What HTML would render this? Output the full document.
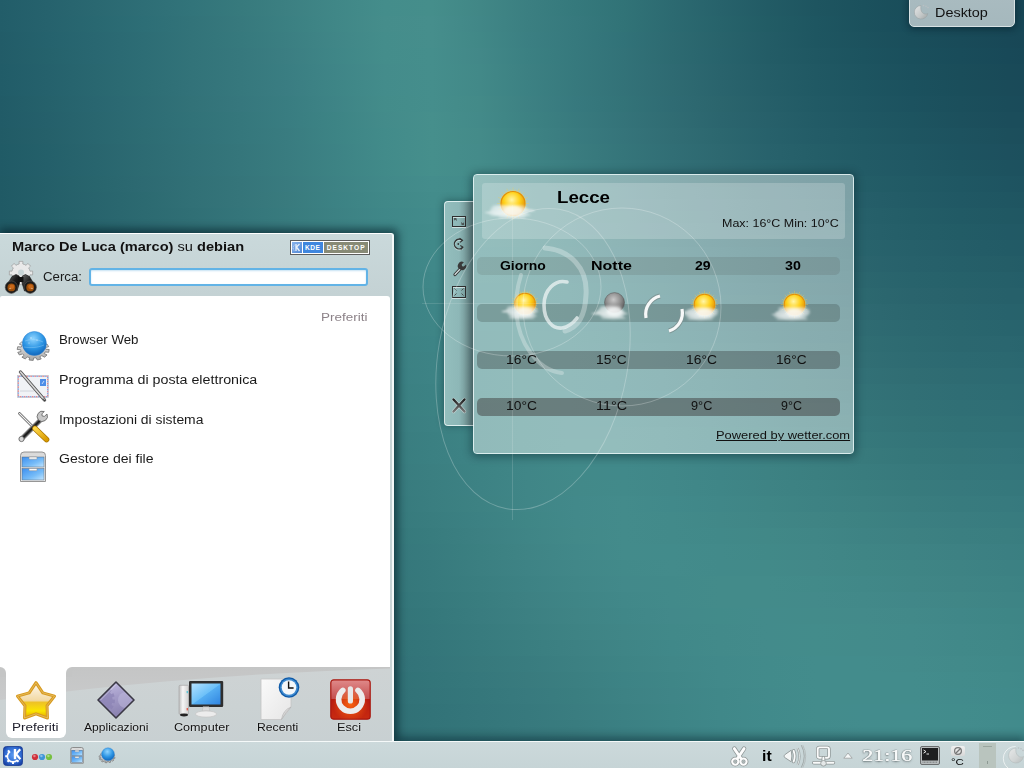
<!DOCTYPE html>
<html><head><meta charset="utf-8">
<style>
html,body{margin:0;padding:0;width:1024px;height:768px;overflow:hidden;font-family:"Liberation Sans",sans-serif;background:#2c6a72;}
#bg{position:absolute;left:0;top:0;width:1024px;height:768px;overflow:hidden}
#bg div{position:absolute;left:0;width:1024px;height:16px;}
.a{position:absolute}
.tx{position:absolute;white-space:nowrap;line-height:1;color:#141414;transform-origin:0 0}
svg{position:absolute;overflow:visible}
</style></head><body>
<div id="bg"><div style="top:0px;background:linear-gradient(90deg,#225d69 0px,#26626d 48px,#2a6871 96px,#2e6e76 144px,#32747a 192px,#377a7d 240px,#3c8082 288px,#408787 336px,#448d8b 384px,#458e8b 432px,#418786 480px,#3b7f81 528px,#35797c 576px,#317377 624px,#2c6a71 672px,#27626b 720px,#225b65 768px,#1e5560 816px,#1b515d 864px,#194d5a 912px,#184958 960px,#174756 1008px,#174655 1024px)"></div>
<div style="top:16px;background:linear-gradient(90deg,#225d69 0px,#26626d 48px,#296871 96px,#2d6e76 144px,#327379 192px,#37797d 240px,#3b8082 288px,#408787 336px,#458d8b 384px,#468e8c 432px,#418787 480px,#3b7f81 528px,#36797d 576px,#317377 624px,#2c6a71 672px,#27636b 720px,#225c65 768px,#1e5661 816px,#1b515d 864px,#194d5b 912px,#184a58 960px,#174756 1008px,#174756 1024px)"></div>
<div style="top:32px;background:linear-gradient(90deg,#225c68 0px,#25626d 48px,#296771 96px,#2d6d75 144px,#327379 192px,#36797d 240px,#3b7f82 288px,#408687 336px,#448d8b 384px,#468e8c 432px,#418887 480px,#3b7f82 528px,#36797d 576px,#317278 624px,#2d6a71 672px,#28636b 720px,#235c66 768px,#1e5661 816px,#1c525e 864px,#1a4e5b 912px,#194b59 960px,#184857 1008px,#184756 1024px)"></div>
<div style="top:48px;background:linear-gradient(90deg,#225c68 0px,#25626c 48px,#296771 96px,#2d6d75 144px,#327379 192px,#36787d 240px,#3b7e82 288px,#3f8687 336px,#448d8b 384px,#458e8c 432px,#428888 480px,#3b8082 528px,#36797d 576px,#327278 624px,#2d6a71 672px,#28636c 720px,#235c66 768px,#1f5762 816px,#1c535f 864px,#1a4f5c 912px,#194c5a 960px,#184958 1008px,#184857 1024px)"></div>
<div style="top:64px;background:linear-gradient(90deg,#215c68 0px,#25616c 48px,#296770 96px,#2d6d75 144px,#327379 192px,#36787d 240px,#3a7e82 288px,#3f8587 336px,#448c8b 384px,#458e8c 432px,#428988 480px,#3c8082 528px,#36797d 576px,#327278 624px,#2e6a72 672px,#29636c 720px,#245d67 768px,#205863 816px,#1d5460 864px,#1b505d 912px,#1a4d5a 960px,#194a58 1008px,#194958 1024px)"></div>
<div style="top:80px;background:linear-gradient(90deg,#215c68 0px,#25616c 48px,#296770 96px,#2d6d74 144px,#327279 192px,#36787d 240px,#3a7d82 288px,#3e8586 336px,#438c8b 384px,#458e8c 432px,#428988 480px,#3c8183 528px,#37797d 576px,#337278 624px,#2f6b72 672px,#2a646d 720px,#255e68 768px,#205964 816px,#1d5561 864px,#1b515e 912px,#1a4e5b 960px,#1a4b59 1008px,#1a4a59 1024px)"></div>
<div style="top:96px;background:linear-gradient(90deg,#215b67 0px,#25616b 48px,#296670 96px,#2d6c74 144px,#327278 192px,#36777d 240px,#397d81 288px,#3e8486 336px,#438c8a 384px,#458e8c 432px,#438a88 480px,#3d8183 528px,#37797e 576px,#337378 624px,#2f6b73 672px,#2b656d 720px,#265f69 768px,#215a65 816px,#1e5662 864px,#1c525f 912px,#1b4f5c 960px,#1a4c5a 1008px,#1a4b5a 1024px)"></div>
<div style="top:112px;background:linear-gradient(90deg,#215b67 0px,#25606b 48px,#29666f 96px,#2d6c74 144px,#317278 192px,#35777c 240px,#397d81 288px,#3d8485 336px,#438b8a 384px,#468f8c 432px,#438a89 480px,#3d8283 528px,#387a7e 576px,#347379 624px,#306c73 672px,#2b656e 720px,#27606a 768px,#225b66 816px,#1f5763 864px,#1d5460 912px,#1c505d 960px,#1b4d5b 1008px,#1b4d5b 1024px)"></div>
<div style="top:128px;background:linear-gradient(90deg,#215b66 0px,#25606a 48px,#29666f 96px,#2d6c73 144px,#317178 192px,#35777c 240px,#397c80 288px,#3d8485 336px,#428b8a 384px,#468f8c 432px,#448b89 480px,#3e8384 528px,#397b7f 576px,#35747a 624px,#316d74 672px,#2c676f 720px,#27616b 768px,#235c67 816px,#205964 864px,#1e5561 912px,#1d525f 960px,#1c4f5c 1008px,#1c4e5c 1024px)"></div>
<div style="top:144px;background:linear-gradient(90deg,#205b66 0px,#24606a 48px,#29656e 96px,#2d6b73 144px,#317177 192px,#35767b 240px,#397c80 288px,#3d8385 336px,#428b8a 384px,#468f8c 432px,#448b8a 480px,#3f8485 528px,#3a7c7f 576px,#35757a 624px,#316e75 672px,#2d6870 720px,#28626c 768px,#245e68 816px,#215a65 864px,#1f5763 912px,#1d5360 960px,#1d505e 1008px,#1c505d 1024px)"></div>
<div style="top:160px;background:linear-gradient(90deg,#205a66 0px,#245f6a 48px,#28656e 96px,#2d6b72 144px,#317077 192px,#35767b 240px,#397c7f 288px,#3d8384 336px,#418a89 384px,#458f8c 432px,#448c8a 480px,#3f8485 528px,#3a7d80 576px,#36767b 624px,#326f76 672px,#2e6971 720px,#29646d 768px,#255f69 816px,#225b66 864px,#205864 912px,#1e5561 960px,#1d525f 1008px,#1d515f 1024px)"></div>
<div style="top:176px;background:linear-gradient(90deg,#205a65 0px,#245f69 48px,#28656d 96px,#2d6a72 144px,#317076 192px,#35757a 240px,#397b7f 288px,#3d8284 336px,#418989 384px,#448d8c 432px,#438b8a 480px,#3f8586 528px,#3b7e81 576px,#37777c 624px,#337077 672px,#2f6a72 720px,#2a656e 768px,#27616a 816px,#235d67 864px,#215a65 912px,#1f5763 960px,#1e5461 1008px,#1e5360 1024px)"></div>
<div style="top:192px;background:linear-gradient(90deg,#205a65 0px,#245f69 48px,#28646d 96px,#2c6a71 144px,#317076 192px,#35757a 240px,#397b7e 288px,#3c8284 336px,#408888 384px,#438c8b 432px,#438b8a 480px,#408586 528px,#3c7f81 576px,#38787d 624px,#347278 672px,#306c73 720px,#2c676f 768px,#28626c 816px,#255e69 864px,#225b66 912px,#205864 960px,#1f5662 1008px,#1f5561 1024px)"></div>
<div style="top:208px;background:linear-gradient(90deg,#205a65 0px,#235f68 48px,#28646d 96px,#2c6a71 144px,#306f75 192px,#34757a 240px,#387b7e 288px,#3c8183 336px,#3f8788 384px,#428b8b 432px,#428a8a 480px,#408686 528px,#3c8082 576px,#38797e 624px,#347379 672px,#306d74 720px,#2d6870 768px,#29646d 816px,#26606a 864px,#235d67 912px,#215a65 960px,#205863 1008px,#205763 1024px)"></div>
<div style="top:224px;background:linear-gradient(90deg,#205964 0px,#235e68 48px,#27646c 96px,#2c6971 144px,#306f75 192px,#347479 240px,#387a7e 288px,#3c8083 336px,#3e8687 384px,#418a8a 432px,#428a89 480px,#408687 528px,#3c8083 576px,#397a7e 624px,#35747a 672px,#316f76 720px,#2e6a71 768px,#2a656e 816px,#27616b 864px,#245e68 912px,#225c66 960px,#215965 1008px,#215964 1024px)"></div>
<div style="top:240px;background:linear-gradient(90deg,#1f5964 0px,#235e68 48px,#27636c 96px,#2b6970 144px,#306e75 192px,#347479 240px,#387a7d 288px,#3b8082 336px,#3e8587 384px,#408989 432px,#418989 480px,#408687 528px,#3d8183 576px,#397b7f 624px,#36767b 672px,#327077 720px,#2f6b73 768px,#2b676f 816px,#28636c 864px,#26606a 912px,#245d68 960px,#225b66 1008px,#225a66 1024px)"></div>
<div style="top:256px;background:linear-gradient(90deg,#1f5964 0px,#235e68 48px,#27636c 96px,#2b6870 144px,#2f6e74 192px,#337479 240px,#37797d 288px,#3b7f82 336px,#3d8486 384px,#408889 432px,#418889 480px,#3f8687 528px,#3d8284 576px,#3a7c80 624px,#37777c 672px,#337278 720px,#306d74 768px,#2d6870 816px,#2a646d 864px,#27616b 912px,#255f69 960px,#245d67 1008px,#235c67 1024px)"></div>
<div style="top:272px;background:linear-gradient(90deg,#1f5964 0px,#235e67 48px,#27636b 96px,#2b6870 144px,#2f6e74 192px,#337378 240px,#37797d 288px,#3a7f81 336px,#3d8485 384px,#3f8788 432px,#408888 480px,#3f8687 528px,#3d8284 576px,#3b7d81 624px,#37787d 672px,#347379 720px,#316e75 768px,#2e6a71 816px,#2b666e 864px,#28636c 912px,#26616a 960px,#255f69 1008px,#245e69 1024px)"></div>
<div style="top:288px;background:linear-gradient(90deg,#1f5964 0px,#235e67 48px,#27636b 96px,#2b686f 144px,#2f6d73 192px,#337378 240px,#36787c 288px,#3a7e81 336px,#3c8385 384px,#3f8687 432px,#408788 480px,#3f8687 528px,#3e8385 576px,#3b7e82 624px,#387a7e 672px,#35757a 720px,#327076 768px,#2f6b73 816px,#2c686f 864px,#2a646d 912px,#28626b 960px,#26606a 1008px,#26606a 1024px)"></div>
<div style="top:304px;background:linear-gradient(90deg,#1f5963 0px,#235d67 48px,#26626b 96px,#2a686f 144px,#2e6d73 192px,#327278 240px,#36787c 288px,#397d80 336px,#3c8284 384px,#3e8587 432px,#3f8788 480px,#3f8687 528px,#3e8385 576px,#3c7f82 624px,#397b7f 672px,#36767b 720px,#337177 768px,#306d74 816px,#2e6971 864px,#2b666e 912px,#29646d 960px,#27626c 1008px,#27626b 1024px)"></div>
<div style="top:320px;background:linear-gradient(90deg,#1f5963 0px,#225d67 48px,#26626b 96px,#2a676f 144px,#2e6d73 192px,#327277 240px,#35777c 288px,#397d80 336px,#3c8184 384px,#3e8586 432px,#3f8687 480px,#3f8687 528px,#3e8486 576px,#3c8083 624px,#3a7c80 672px,#37787c 720px,#347378 768px,#316f75 816px,#2f6b72 864px,#2c6870 912px,#2a666e 960px,#28646d 1008px,#28636d 1024px)"></div>
<div style="top:336px;background:linear-gradient(90deg,#1f5863 0px,#225d67 48px,#26626a 96px,#2a676e 144px,#2e6c72 192px,#317277 240px,#35777b 288px,#387c7f 336px,#3b8183 384px,#3d8486 432px,#3f8687 480px,#3f8687 528px,#3f8486 576px,#3d8184 624px,#3a7e81 672px,#38797d 720px,#35757a 768px,#327076 816px,#306d73 864px,#2d6a71 912px,#2b676f 960px,#2a666f 1008px,#29656e 1024px)"></div>
<div style="top:352px;background:linear-gradient(90deg,#1f5863 0px,#225d66 48px,#26626a 96px,#2a676e 144px,#2d6c72 192px,#317176 240px,#35767b 288px,#387b7f 336px,#3b8082 384px,#3d8385 432px,#3f8687 480px,#3f8687 528px,#3f8586 576px,#3d8285 624px,#3b7f82 672px,#397b7e 720px,#36767b 768px,#337277 816px,#316e74 864px,#2e6b72 912px,#2c6971 960px,#2b6870 1008px,#2a6770 1024px)"></div>
<div style="top:368px;background:linear-gradient(90deg,#1f5863 0px,#225d66 48px,#26616a 96px,#29666e 144px,#2d6b72 192px,#317176 240px,#34767a 288px,#377b7e 336px,#3a7f82 384px,#3d8385 432px,#3f8586 480px,#3f8687 528px,#3f8687 576px,#3e8385 624px,#3c8083 672px,#397c7f 720px,#37787c 768px,#347479 816px,#327076 864px,#306d73 912px,#2e6b72 960px,#2c6a72 1008px,#2c6972 1024px)"></div>
<div style="top:384px;background:linear-gradient(90deg,#1e5863 0px,#225c66 48px,#25616a 96px,#29666d 144px,#2d6b71 192px,#307075 240px,#34757a 288px,#377a7d 336px,#3a7f81 384px,#3c8284 432px,#3e8586 480px,#408687 528px,#408687 576px,#3e8486 624px,#3c8184 672px,#3a7e81 720px,#387a7d 768px,#35767a 816px,#337277 864px,#316f75 912px,#2f6d74 960px,#2d6c73 1008px,#2d6b73 1024px)"></div>
<div style="top:400px;background:linear-gradient(90deg,#1e5863 0px,#225c66 48px,#256169 96px,#29666d 144px,#2c6b71 192px,#307075 240px,#337579 288px,#36797d 336px,#397e80 384px,#3c8283 432px,#3e8586 480px,#408687 528px,#408788 576px,#3f8587 624px,#3d8385 672px,#3b7f82 720px,#397b7e 768px,#36777b 816px,#347478 864px,#327176 912px,#306f75 960px,#2f6e75 1008px,#2e6d75 1024px)"></div>
<div style="top:416px;background:linear-gradient(90deg,#1e5862 0px,#215c66 48px,#256169 96px,#28656d 144px,#2c6a71 192px,#2f6f75 240px,#337478 288px,#36797c 336px,#397d80 384px,#3c8183 432px,#3e8485 480px,#408687 528px,#408788 576px,#408688 624px,#3e8485 672px,#3c8083 720px,#3a7d80 768px,#38797c 816px,#35767a 864px,#337377 912px,#317176 960px,#307076 1008px,#306f76 1024px)"></div>
<div style="top:432px;background:linear-gradient(90deg,#1e5862 0px,#215c65 48px,#256069 96px,#28656d 144px,#2b6a70 192px,#2f6f74 240px,#327378 288px,#35787c 336px,#397c7f 384px,#3b8082 432px,#3e8485 480px,#408687 528px,#418889 576px,#408788 624px,#3f8586 672px,#3c8284 720px,#3b7f81 768px,#397b7e 816px,#36787b 864px,#347579 912px,#327378 960px,#317278 1008px,#317178 1024px)"></div>
<div style="top:448px;background:linear-gradient(90deg,#1e5762 0px,#215c65 48px,#246069 96px,#28656c 144px,#2b6970 192px,#2e6e74 240px,#327377 288px,#35777b 336px,#387c7e 384px,#3b8082 432px,#3e8385 480px,#408687 528px,#418889 576px,#418889 624px,#3f8687 672px,#3d8385 720px,#3c8082 768px,#3a7d7f 816px,#387a7c 864px,#35777a 912px,#347579 960px,#33747a 1008px,#327379 1024px)"></div>
<div style="top:464px;background:linear-gradient(90deg,#1e5762 0px,#215b65 48px,#246068 96px,#27646c 144px,#2b6970 192px,#2e6d73 240px,#317277 288px,#34777a 336px,#387b7e 384px,#3b7f81 432px,#3d8384 480px,#408687 528px,#418989 576px,#41898a 624px,#408788 672px,#3e8486 720px,#3d8283 768px,#3b7f80 816px,#397c7e 864px,#37797c 912px,#35777b 960px,#34767b 1008px,#34757b 1024px)"></div>
<div style="top:480px;background:linear-gradient(90deg,#1e5762 0px,#215b65 48px,#245f68 96px,#27646c 144px,#2a686f 192px,#2e6d73 240px,#317176 288px,#34767a 336px,#377a7d 384px,#3a7e80 432px,#3d8284 480px,#408687 528px,#428989 576px,#428a8a 624px,#418889 672px,#3f8687 720px,#3e8384 768px,#3c8182 816px,#3a7e7f 864px,#387b7d 912px,#37797d 960px,#35787c 1008px,#35777c 1024px)"></div>
<div style="top:496px;background:linear-gradient(90deg,#1d5762 0px,#205b65 48px,#245f68 96px,#27636b 144px,#2a686f 192px,#2d6c72 240px,#307176 288px,#337579 336px,#36797c 384px,#3a7e80 432px,#3d8283 480px,#408687 528px,#42898a 576px,#438b8b 624px,#41898a 672px,#408788 720px,#3f8585 768px,#3d8283 816px,#3c8081 864px,#3a7d7f 912px,#387b7e 960px,#377a7e 1008px,#36797e 1024px)"></div>
<div style="top:512px;background:linear-gradient(90deg,#1d5762 0px,#205b65 48px,#235f68 96px,#26636b 144px,#2a676e 192px,#2d6c72 240px,#307075 288px,#337479 336px,#36797c 384px,#397d7f 432px,#3c8183 480px,#3f8686 528px,#42898a 576px,#438b8b 624px,#428a8a 672px,#418888 720px,#408686 768px,#3f8484 816px,#3d8282 864px,#3b7f81 912px,#3a7d80 960px,#387c7f 1008px,#387b7f 1024px)"></div>
<div style="top:528px;background:linear-gradient(90deg,#1d5761 0px,#205b64 48px,#235f68 96px,#26636b 144px,#29676e 192px,#2c6b71 240px,#2f7075 288px,#327478 336px,#35787b 384px,#387c7e 432px,#3c8082 480px,#3f8586 528px,#428989 576px,#438b8b 624px,#428a8a 672px,#418989 720px,#418887 768px,#408686 816px,#3e8384 864px,#3d8182 912px,#3b7f81 960px,#3a7e80 1008px,#397d80 1024px)"></div>
<div style="top:544px;background:linear-gradient(90deg,#1d5661 0px,#205a64 48px,#235e67 96px,#26626a 144px,#29676e 192px,#2c6b71 240px,#2f6f74 288px,#327377 336px,#35777b 384px,#387b7e 432px,#3b8081 480px,#3f8485 528px,#418889 576px,#438b8b 624px,#428b8b 672px,#428a8a 720px,#418988 768px,#418787 816px,#3f8585 864px,#3e8384 912px,#3d8183 960px,#3b7f82 1008px,#3a7f81 1024px)"></div>
<div style="top:560px;background:linear-gradient(90deg,#1d5661 0px,#205a64 48px,#235e67 96px,#25626a 144px,#28666d 192px,#2b6a71 240px,#2e6e74 288px,#317277 336px,#34767a 384px,#377a7d 432px,#3b7f81 480px,#3e8385 528px,#418788 576px,#428a8a 624px,#438b8b 672px,#428a8a 720px,#428a89 768px,#428888 816px,#408786 864px,#3f8585 912px,#3e8384 960px,#3c8183 1008px,#3b8183 1024px)"></div>
<div style="top:576px;background:linear-gradient(90deg,#1d5661 0px,#1f5a64 48px,#225e67 96px,#25626a 144px,#28666d 192px,#2b6a70 240px,#2e6e73 288px,#317276 336px,#347679 384px,#377a7d 432px,#3a7e80 480px,#3d8284 528px,#408687 576px,#42898a 624px,#428a8a 672px,#438b8a 720px,#438b8a 768px,#428a89 816px,#418888 864px,#408686 912px,#3f8485 960px,#3d8384 1008px,#3c8284 1024px)"></div>
<div style="top:592px;background:linear-gradient(90deg,#1c5661 0px,#1f5a64 48px,#225d67 96px,#25616a 144px,#28656d 192px,#2b6970 240px,#2d6d73 288px,#307176 336px,#337579 384px,#36797c 432px,#397d7f 480px,#3d8183 528px,#3f8586 576px,#418889 624px,#428a8a 672px,#438b8a 720px,#438b8a 768px,#438a8a 816px,#428989 864px,#418788 912px,#408686 960px,#3e8485 1008px,#3d8485 1024px)"></div>
<div style="top:608px;background:linear-gradient(90deg,#1c5661 0px,#1f5964 48px,#225d66 96px,#256169 144px,#27656c 192px,#2a696f 240px,#2d6c72 288px,#307075 336px,#337478 384px,#35787b 432px,#397c7f 480px,#3c8082 528px,#3f8485 576px,#408788 624px,#42898a 672px,#428b8a 720px,#438b8b 768px,#438b8a 816px,#438a8a 864px,#428989 912px,#408788 960px,#3e8686 1008px,#3e8586 1024px)"></div>
<div style="top:624px;background:linear-gradient(90deg,#1c5661 0px,#1f5963 48px,#225d66 96px,#246169 144px,#27646c 192px,#2a686f 240px,#2d6c72 288px,#2f7075 336px,#327378 384px,#35777b 432px,#387b7e 480px,#3b7f81 528px,#3e8384 576px,#408687 624px,#418989 672px,#428a8a 720px,#438b8b 768px,#438c8b 816px,#438b8a 864px,#428a8a 912px,#418889 960px,#3f8787 1008px,#3e8687 1024px)"></div>
<div style="top:640px;background:linear-gradient(90deg,#1c5661 0px,#1f5963 48px,#215d66 96px,#246069 144px,#27646c 192px,#29686f 240px,#2c6b72 288px,#2f6f74 336px,#317377 384px,#34767a 432px,#377a7d 480px,#3a7e80 528px,#3d8183 576px,#3f8586 624px,#408889 672px,#428a8a 720px,#438b8b 768px,#438c8b 816px,#438b8b 864px,#438a8b 912px,#418989 960px,#408888 1008px,#3f8788 1024px)"></div>
<div style="top:656px;background:linear-gradient(90deg,#1c5561 0px,#1e5963 48px,#215c66 96px,#246069 144px,#26646b 192px,#29676e 240px,#2c6b71 288px,#2e6e74 336px,#317277 384px,#34757a 432px,#37797c 480px,#397c7f 528px,#3c8082 576px,#3e8485 624px,#408788 672px,#41898a 720px,#428b8b 768px,#438c8c 816px,#438c8c 864px,#438b8b 912px,#428a8a 960px,#408989 1008px,#408889 1024px)"></div>
<div style="top:672px;background:linear-gradient(90deg,#1c5560 0px,#1e5963 48px,#215c66 96px,#236068 144px,#26636b 192px,#29676e 240px,#2b6a71 288px,#2e6e74 336px,#307176 384px,#337579 432px,#36787c 480px,#397b7e 528px,#3b7f81 576px,#3d8385 624px,#3f8687 672px,#41898a 720px,#428b8b 768px,#438c8c 816px,#438c8c 864px,#438c8c 912px,#428b8b 960px,#418a8a 1008px,#40898a 1024px)"></div>
<div style="top:688px;background:linear-gradient(90deg,#1c5560 0px,#1e5963 48px,#215c66 96px,#235f68 144px,#26636b 192px,#28666e 240px,#2b6a70 288px,#2d6d73 336px,#307176 384px,#337479 432px,#35777b 480px,#387a7e 528px,#3a7e80 576px,#3d8284 624px,#3f8587 672px,#408889 720px,#428a8b 768px,#438c8c 816px,#438c8c 864px,#438c8c 912px,#428b8c 960px,#418a8b 1008px,#408a8a 1024px)"></div>
<div style="top:704px;background:linear-gradient(90deg,#1b5560 0px,#1e5863 48px,#205c65 96px,#235f68 144px,#26636b 192px,#28666d 240px,#2b6970 288px,#2d6d73 336px,#307075 384px,#327378 432px,#35767b 480px,#37797d 528px,#3a7d80 576px,#3c8183 624px,#3e8586 672px,#408889 720px,#418a8b 768px,#438c8c 816px,#438c8d 864px,#438c8d 912px,#428c8c 960px,#418b8b 1008px,#418a8b 1024px)"></div>
<div style="top:720px;background:linear-gradient(90deg,#1b5560 0px,#1e5863 48px,#205c65 96px,#235f68 144px,#25626b 192px,#28666d 240px,#2a6970 288px,#2d6c72 336px,#2f6f75 384px,#327378 432px,#34767a 480px,#37797d 528px,#397c7f 576px,#3b8083 624px,#3d8486 672px,#3f8789 720px,#418a8b 768px,#428b8c 816px,#438c8d 864px,#438d8d 912px,#438c8d 960px,#428b8c 1008px,#418b8c 1024px)"></div>
<div style="top:736px;background:linear-gradient(90deg,#1b5560 0px,#1e5863 48px,#205b65 96px,#235f68 144px,#25626a 192px,#27656d 240px,#2a6970 288px,#2c6c72 336px,#2f6f75 384px,#317277 432px,#34757a 480px,#36787c 528px,#397b7f 576px,#3b7f82 624px,#3d8385 672px,#3f8788 720px,#41898a 768px,#428b8c 816px,#438c8d 864px,#438d8d 912px,#438d8d 960px,#428c8c 1008px,#418b8c 1024px)"></div>
<div style="top:752px;background:linear-gradient(90deg,#1b5560 0px,#1e5863 48px,#205b65 96px,#225e68 144px,#25626a 192px,#27656d 240px,#2a686f 288px,#2c6b72 336px,#2e6e74 384px,#317177 432px,#337479 480px,#36787c 528px,#387b7f 576px,#3a7f82 624px,#3d8385 672px,#3f8688 720px,#40898a 768px,#428b8c 816px,#438c8d 864px,#438d8d 912px,#438d8d 960px,#428c8d 1008px,#428c8d 1024px)"></div></div>
<!-- DESKTOP TOOLBOX -->
<div class="a" style="left:909px;top:-5px;width:106px;height:32px;border-radius:5px;box-shadow:0 1px 7px 1px rgba(0,20,30,.45)"></div>
<div class="a" style="left:909px;top:-5px;width:104px;height:30px;background:linear-gradient(#a9bbc0,#a5b8bd);border:1px solid #d8e2e4;border-radius:5px"></div>
<svg style="left:913px;top:3px" width="17" height="17" viewBox="0 0 17 17">
 <defs><linearGradient id="csh" x1="0" y1="0" x2="1" y2="1"><stop offset="0" stop-color="#e4e6e6"/><stop offset=".6" stop-color="#c4c8c8"/><stop offset="1" stop-color="#9ea4a4"/></linearGradient></defs>
 <path d="M8 2.5A6.8 6.8 0 1 0 14.8 10.5C13.5 11.5 11 11.2 9.5 9.8 7.8 8.2 7.5 5 8 2.5z" fill="url(#csh)" stroke="#9aa2a4" stroke-width=".6"/>
 <circle cx="10.5" cy="2.6" r=".8" fill="#b9c0c2"/><circle cx="13" cy="3.2" r=".8" fill="#b9c0c2"/><circle cx="15" cy="4.6" r=".8" fill="#b9c0c2"/>
</svg>

<!-- WIDGET HANDLE -->
<div class="a" style="left:444px;top:201px;width:40px;height:224px;border-radius:4px;box-shadow:0 0 7px 1px rgba(0,25,35,.35)"></div>
<div class="a" style="left:444px;top:201px;width:38px;height:223px;background:linear-gradient(90deg,#93bebd,#8db7b7 14px,#7fa5a5 19px,#6f9090 24px,#5e7c7c 29px);border:1px solid rgba(235,248,248,.85);border-radius:4px"></div>
<svg style="left:452px;top:216px" width="14" height="12" viewBox="0 0 14 12"><g fill="none" stroke-width="1"><g stroke="#e6f2f2" transform="translate(0 1)" opacity=".7"><rect x=".5" y=".5" width="13" height="10"/></g><rect x=".5" y=".5" width="13" height="10" stroke="#2e2e2e"/><path d="M2.5 2.5l2.5 1.8M11.5 8.5L9 6.7" stroke="#444"/><path d="M2.5 2.5h2M2.5 2.5v1.8M11.5 8.5h-2M11.5 8.5v-1.8" stroke="#444" stroke-width=".8"/></g></svg>
<svg style="left:452px;top:237px" width="14" height="14" viewBox="0 0 14 14"><g fill="none"><path d="M10.2 3.3A4.8 4.8 0 1 0 10.8 10.2" stroke="#e6f2f2" stroke-width="1.4" transform="translate(0 1)" opacity=".6"/><path d="M10.2 3.3A4.8 4.8 0 1 0 10.8 10.2" stroke="#333" stroke-width="1.3"/><path d="M7.5 1.2l3 2.2-2.6 2M8.3 8.6l2.6 1.5-2.2 2.6" stroke="#333" stroke-width="1.1"/></g><circle cx="6.3" cy="7" r=".9" fill="#333"/></svg>
<svg style="left:453px;top:261px" width="14" height="15" viewBox="0 0 14 15"><path d="M2 13.5L7.6 7.5" stroke="#333" stroke-width="3.2" stroke-linecap="round"/><path d="M2 13.5L7.6 7.5" stroke="#d6e2e2" stroke-width="1.2" stroke-linecap="round"/><path d="M6.8 8.2a4 4 0 0 0 6.2-4.6l-2.2 2-1.7-.4-.4-1.7L10.9 1.3A4 4 0 0 0 6.8 8.2z" fill="#3a3a3a"/></svg>
<svg style="left:452px;top:286px" width="14" height="13" viewBox="0 0 14 13"><g fill="none" stroke-width="1"><rect x=".5" y="1.5" width="13" height="11" stroke="#e6f2f2" opacity=".7"/><rect x=".5" y=".5" width="13" height="11" stroke="#2e2e2e"/><path d="M2.5 2.5l2 2M11.5 2.5l-2 2M2.5 9.5l2-2M11.5 9.5l-2-2" stroke="#444" stroke-width=".9"/></g></svg>
<svg style="left:452px;top:398px" width="14" height="15" viewBox="0 0 14 15"><defs><linearGradient id="xg" x1="0" y1="0" x2="0" y2="1"><stop offset="0" stop-color="#222"/><stop offset="1" stop-color="#777"/></linearGradient></defs><path d="M1.5 1.5l11 12M12.5 1.5l-11 12" stroke="#e8f0f0" stroke-width="3.4" stroke-linecap="round" opacity=".6"/><path d="M1.5 1.5l11 12M12.5 1.5l-11 12" stroke="url(#xg)" stroke-width="2.4" stroke-linecap="round"/></svg>

<!-- WIDGET -->
<div class="a" style="left:473px;top:174px;width:381px;height:280px;border-radius:4px;box-shadow:0 1px 9px 2px rgba(0,25,35,.4)"></div>
<div class="a" style="left:474px;top:175px;width:379px;height:278px;overflow:hidden;border-radius:3px"><div style="position:absolute;left:0;top:0px;width:379px;height:12px;background:linear-gradient(90deg,#96c0be 0px,#93bbbb 47px,#8fb7b7 94px,#8cb2b4 141px,#89aeb1 188px,#86aaad 235px,#83a6aa 282px,#80a3a8 329px,#7da1a6 376px,#7da1a6 379px)"></div>
<div style="position:absolute;left:0;top:12px;width:379px;height:12px;background:linear-gradient(90deg,#95bfbe 0px,#93bcbb 47px,#90b7b8 94px,#8cb3b5 141px,#89aeb1 188px,#86abae 235px,#83a7ab 282px,#80a4a9 329px,#7ea1a6 376px,#7da1a6 379px)"></div>
<div style="position:absolute;left:0;top:24px;width:379px;height:12px;background:linear-gradient(90deg,#95bfbd 0px,#93bcbb 47px,#90b8b8 94px,#8db3b5 141px,#8aafb2 188px,#87abaf 235px,#84a8ac 282px,#81a5a9 329px,#7ea2a7 376px,#7ea2a7 379px)"></div>
<div style="position:absolute;left:0;top:36px;width:379px;height:12px;background:linear-gradient(90deg,#94bfbd 0px,#93bcbb 47px,#90b8b8 94px,#8db4b5 141px,#8ab0b2 188px,#87acaf 235px,#84a8ac 282px,#82a5aa 329px,#7fa3a8 376px,#7fa3a7 379px)"></div>
<div style="position:absolute;left:0;top:48px;width:379px;height:12px;background:linear-gradient(90deg,#94bebd 0px,#93bcbb 47px,#90b8b9 94px,#8eb4b6 141px,#8bb0b3 188px,#88adb0 235px,#85a9ad 282px,#82a6aa 329px,#80a4a8 376px,#80a4a8 379px)"></div>
<div style="position:absolute;left:0;top:60px;width:379px;height:12px;background:linear-gradient(90deg,#94bebd 0px,#93bcbb 47px,#90b9b9 94px,#8eb5b6 141px,#8bb1b3 188px,#88adb0 235px,#86aaad 282px,#83a7ab 329px,#81a4a9 376px,#80a4a9 379px)"></div>
<div style="position:absolute;left:0;top:72px;width:379px;height:12px;background:linear-gradient(90deg,#93bdbd 0px,#92bcbb 47px,#91b9b9 94px,#8eb5b7 141px,#8cb2b4 188px,#89aeb1 235px,#86abae 282px,#84a8ac 329px,#81a5a9 376px,#81a5a9 379px)"></div>
<div style="position:absolute;left:0;top:84px;width:379px;height:12px;background:linear-gradient(90deg,#93bdbd 0px,#92bcbb 47px,#91b9b9 94px,#8fb6b7 141px,#8cb2b4 188px,#89afb1 235px,#87acaf 282px,#84a9ac 329px,#82a6aa 376px,#82a6aa 379px)"></div>
<div style="position:absolute;left:0;top:96px;width:379px;height:12px;background:linear-gradient(90deg,#93bdbc 0px,#92bcbb 47px,#91b9ba 94px,#8fb6b7 141px,#8cb3b5 188px,#8ab0b2 235px,#87acaf 282px,#85a9ad 329px,#83a7ab 376px,#83a7aa 379px)"></div>
<div style="position:absolute;left:0;top:108px;width:379px;height:12px;background:linear-gradient(90deg,#92bcbc 0px,#92bcbb 47px,#91baba 94px,#8fb7b8 141px,#8db4b5 188px,#8ab0b3 235px,#88adb0 282px,#86aaad 329px,#84a7ab 376px,#83a7ab 379px)"></div>
<div style="position:absolute;left:0;top:120px;width:379px;height:12px;background:linear-gradient(90deg,#92bcbc 0px,#92bcbb 47px,#91baba 94px,#8fb7b8 141px,#8db4b6 188px,#8bb1b3 235px,#89aeb0 282px,#86abae 329px,#84a8ac 376px,#84a8ac 379px)"></div>
<div style="position:absolute;left:0;top:132px;width:379px;height:12px;background:linear-gradient(90deg,#92bcbc 0px,#92bcbb 47px,#91baba 94px,#90b8b8 141px,#8eb5b6 188px,#8bb2b4 235px,#89afb1 282px,#87acaf 329px,#85a9ac 376px,#85a9ac 379px)"></div>
<div style="position:absolute;left:0;top:144px;width:379px;height:12px;background:linear-gradient(90deg,#92bcbc 0px,#92bcbb 47px,#91babb 94px,#90b8b9 141px,#8eb5b7 188px,#8cb2b4 235px,#8aafb2 282px,#88adaf 329px,#86aaad 376px,#85aaad 379px)"></div>
<div style="position:absolute;left:0;top:156px;width:379px;height:12px;background:linear-gradient(90deg,#92bbbb 0px,#92bcbb 47px,#92bbbb 94px,#90b9b9 141px,#8eb6b7 188px,#8cb3b5 235px,#8ab0b2 282px,#88adb0 329px,#86abae 376px,#86abae 379px)"></div>
<div style="position:absolute;left:0;top:168px;width:379px;height:12px;background:linear-gradient(90deg,#92bbbb 0px,#92bcbb 47px,#92bbbb 94px,#91b9ba 141px,#8fb7b8 188px,#8db4b5 235px,#8bb1b3 282px,#89aeb0 329px,#87acae 376px,#87acae 379px)"></div>
<div style="position:absolute;left:0;top:180px;width:379px;height:12px;background:linear-gradient(90deg,#91bbbb 0px,#92bcbb 47px,#92bbbb 94px,#91baba 141px,#8fb7b8 188px,#8db5b6 235px,#8bb2b4 282px,#89afb1 329px,#87adaf 376px,#87acaf 379px)"></div>
<div style="position:absolute;left:0;top:192px;width:379px;height:12px;background:linear-gradient(90deg,#91bbbb 0px,#92bcbb 47px,#92bbbb 94px,#91baba 141px,#90b8b9 188px,#8eb5b6 235px,#8cb3b4 282px,#8ab0b2 329px,#88adb0 376px,#88adb0 379px)"></div>
<div style="position:absolute;left:0;top:204px;width:379px;height:12px;background:linear-gradient(90deg,#91bbbb 0px,#92bcbb 47px,#92bbbb 94px,#91babb 141px,#90b8b9 188px,#8eb6b7 235px,#8cb3b5 282px,#8bb1b2 329px,#89aeb0 376px,#89aeb0 379px)"></div>
<div style="position:absolute;left:0;top:216px;width:379px;height:12px;background:linear-gradient(90deg,#91bbba 0px,#92bcbb 47px,#92bcbc 94px,#92bbbb 141px,#90b9ba 188px,#8fb7b8 235px,#8db4b5 282px,#8bb2b3 329px,#89afb1 376px,#89afb1 379px)"></div>
<div style="position:absolute;left:0;top:228px;width:379px;height:12px;background:linear-gradient(90deg,#91baba 0px,#92bcbb 47px,#93bcbc 94px,#92bbbb 141px,#91baba 188px,#8fb7b8 235px,#8db5b6 282px,#8cb3b4 329px,#8ab0b2 376px,#8ab0b2 379px)"></div>
<div style="position:absolute;left:0;top:240px;width:379px;height:12px;background:linear-gradient(90deg,#91baba 0px,#92bcbb 47px,#93bcbc 94px,#92bcbc 141px,#91baba 188px,#90b8b9 235px,#8eb6b7 282px,#8cb3b4 329px,#8bb1b2 376px,#8bb1b2 379px)"></div>
<div style="position:absolute;left:0;top:252px;width:379px;height:12px;background:linear-gradient(90deg,#91baba 0px,#92bcbb 47px,#93bcbc 94px,#93bcbc 141px,#92bbbb 188px,#90b9b9 235px,#8eb7b7 282px,#8db4b5 329px,#8bb2b3 376px,#8bb2b3 379px)"></div>
<div style="position:absolute;left:0;top:264px;width:379px;height:12px;background:linear-gradient(90deg,#91baba 0px,#92bcbb 47px,#93bdbc 94px,#93bdbc 141px,#92bbbb 188px,#90b9ba 235px,#8fb7b8 282px,#8eb5b6 329px,#8cb3b4 376px,#8cb3b4 379px)"></div>
<div style="position:absolute;left:0;top:276px;width:379px;height:12px;background:linear-gradient(90deg,#90b9b9 0px,#92bcbb 47px,#93bdbd 94px,#93bdbd 141px,#92bcbc 188px,#91baba 235px,#90b8b8 282px,#8eb6b6 329px,#8db4b5 376px,#8db4b4 379px)"></div></div>
<div class="a" style="left:473px;top:174px;width:379px;height:278px;border:1px solid rgba(235,248,248,.9);border-radius:4px"></div>
<div class="a" style="left:482px;top:183px;width:363px;height:56px;background:rgba(255,255,255,.2);border-radius:3px"></div>

<div class="a" style="left:477px;top:257px;width:363px;height:18px;background:rgba(34,10,0,.09);border-radius:5px"></div>
<div class="a" style="left:477px;top:304px;width:363px;height:18px;background:rgba(8,4,0,.17);border-radius:5px"></div>
<div class="a" style="left:477px;top:351px;width:363px;height:18px;background:rgba(13,0,0,.25);border-radius:5px"></div>
<div class="a" style="left:477px;top:398px;width:363px;height:18px;background:rgba(21,0,0,.33);border-radius:5px"></div>


<!-- weather icons -->
<svg width="0" height="0" style="left:0;top:0">
 <defs>
  <radialGradient id="sun" cx=".45" cy=".35" r=".65"><stop offset="0" stop-color="#fff6a8"/><stop offset=".5" stop-color="#ffd21c"/><stop offset="1" stop-color="#e08a00"/></radialGradient>
  <radialGradient id="glow" cx=".5" cy=".5" r=".5"><stop offset=".6" stop-color="#ffe04a" stop-opacity=".7"/><stop offset="1" stop-color="#ffe04a" stop-opacity="0"/></radialGradient>
  <radialGradient id="moon" cx=".45" cy=".35" r=".65"><stop offset="0" stop-color="#c8c8c8"/><stop offset=".6" stop-color="#8a8a8a"/><stop offset="1" stop-color="#555"/></radialGradient>
  <filter id="cb" x="-20%" y="-80%" width="140%" height="260%"><feGaussianBlur stdDeviation="0.8"/></filter>
 </defs>
</svg>
<svg style="left:481px;top:183px" width="60" height="42" viewBox="0 0 60 42">
 <path d="M42.8 20.5L48.0 20.5M42.6 22.6L46.2 23.3M42.0 24.6L46.8 26.6M41.0 26.5L44.1 28.6M39.6 28.1L43.3 31.8M38.0 29.5L40.1 32.6M36.1 30.5L38.1 35.3M34.1 31.1L34.8 34.7M32.0 31.3L32.0 36.5M29.9 31.1L29.2 34.7M27.9 30.5L25.9 35.3M26.0 29.5L23.9 32.6M24.4 28.1L20.7 31.8M23.0 26.5L19.9 28.6M22.0 24.6L17.2 26.6M21.4 22.6L17.8 23.3M21.2 20.5L16.0 20.5M21.4 18.4L17.8 17.7M22.0 16.4L17.2 14.4M23.0 14.5L19.9 12.4M24.4 12.9L20.7 9.2M26.0 11.5L23.9 8.4M27.9 10.5L25.9 5.7M29.9 9.9L29.2 6.3M32.0 9.7L32.0 4.5M34.1 9.9L34.8 6.3M36.1 10.5L38.1 5.7M38.0 11.5L40.1 8.4M39.6 12.9L43.3 9.2M41.0 14.5L44.1 12.4M42.0 16.4L46.8 14.4M42.6 18.4L46.2 17.7" stroke="#ffd040" stroke-width=".7" opacity=".45"/>
 <circle cx="32" cy="20.5" r="13.2" fill="#ffdf50" opacity=".35"/>
 <circle cx="32" cy="20.5" r="12" fill="url(#sun)" stroke="#e3900a" stroke-width="1.20"/>
 <g filter="url(#cb)" fill="#fbfdfd">
  <ellipse cx="27.8" cy="23.0" rx="17.1" ry="1.2" opacity="0.60"/>
  <ellipse cx="28.1" cy="25.2" rx="19.0" ry="1.2" opacity="0.74"/>
  <ellipse cx="31.3" cy="27.4" rx="22.9" ry="1.2" opacity="0.88"/>
  <ellipse cx="25.7" cy="29.6" rx="22.2" ry="1.2" opacity="0.88"/>
  <ellipse cx="29.1" cy="31.8" rx="21.0" ry="1.2" opacity="0.74"/>
  <ellipse cx="31.1" cy="34.0" rx="14.3" ry="1.2" opacity="0.60"/>
  <ellipse cx="32" cy="28.0" rx="9.6" ry="5.4" opacity=".55"/>
 </g>
</svg>
<svg style="left:496px;top:289px" width="50" height="36" viewBox="0 0 50 36">
 <path d="M38.3 14.5L42.7 14.5M38.1 16.3L41.2 16.9M37.6 18.0L41.7 19.8M36.7 19.7L39.3 21.4M35.6 21.1L38.7 24.2M34.2 22.2L35.9 24.8M32.5 23.1L34.3 27.2M30.8 23.6L31.4 26.7M29.0 23.8L29.0 28.2M27.2 23.6L26.6 26.7M25.5 23.1L23.7 27.2M23.8 22.2L22.1 24.8M22.4 21.1L19.3 24.2M21.3 19.7L18.7 21.4M20.4 18.0L16.3 19.8M19.9 16.3L16.8 16.9M19.7 14.5L15.3 14.5M19.9 12.7L16.8 12.1M20.4 11.0L16.3 9.2M21.3 9.3L18.7 7.6M22.4 7.9L19.3 4.8M23.8 6.8L22.1 4.2M25.5 5.9L23.7 1.8M27.2 5.4L26.6 2.3M29.0 5.2L29.0 0.8M30.8 5.4L31.4 2.3M32.5 5.9L34.3 1.8M34.2 6.8L35.9 4.2M35.6 7.9L38.7 4.8M36.7 9.3L39.3 7.6M37.6 11.0L41.7 9.2M38.1 12.7L41.2 12.1" stroke="#ffd040" stroke-width=".7" opacity=".45"/>
 <circle cx="29" cy="14.5" r="11.5" fill="#ffdf50" opacity=".35"/>
 <circle cx="29" cy="14.5" r="10.3" fill="url(#sun)" stroke="#e3900a" stroke-width="1.03"/>
 <g filter="url(#cb)" fill="#fbfdfd">
  <ellipse cx="25.4" cy="18.0" rx="14.7" ry="1.2" opacity="0.60"/>
  <ellipse cx="25.8" cy="20.2" rx="16.1" ry="1.2" opacity="0.74"/>
  <ellipse cx="23.9" cy="22.4" rx="18.5" ry="1.2" opacity="0.88"/>
  <ellipse cx="25.4" cy="24.6" rx="14.5" ry="1.2" opacity="0.88"/>
  <ellipse cx="26.7" cy="26.8" rx="14.7" ry="1.2" opacity="0.74"/>
  <ellipse cx="25.8" cy="29.0" rx="13.2" ry="1.2" opacity="0.60"/>
  <ellipse cx="29" cy="23.0" rx="8.2" ry="4.6" opacity=".55"/>
 </g>
</svg>
<svg style="left:586px;top:289px" width="50" height="36" viewBox="0 0 50 36">
 <circle cx="28.5" cy="13.6" r="10" fill="url(#moon)" stroke="#555" stroke-width=".5"/>
 <g filter="url(#cb)" fill="#fbfdfd">
  <ellipse cx="24.6" cy="18.0" rx="11.5" ry="1.2" opacity="0.60"/>
  <ellipse cx="24.5" cy="20.2" rx="12.4" ry="1.2" opacity="0.74"/>
  <ellipse cx="24.4" cy="22.4" rx="14.7" ry="1.2" opacity="0.88"/>
  <ellipse cx="23.6" cy="24.6" rx="18.4" ry="1.2" opacity="0.88"/>
  <ellipse cx="25.9" cy="26.8" rx="12.8" ry="1.2" opacity="0.74"/>
  <ellipse cx="27.5" cy="29.0" rx="12.6" ry="1.2" opacity="0.60"/>
  <ellipse cx="28.5" cy="23.0" rx="8.0" ry="4.5" opacity=".55"/>
 </g>
</svg>
<svg style="left:676px;top:290px" width="50" height="36" viewBox="0 0 50 36">
 <path d="M37.8 14.5L42.2 14.5M37.6 16.3L40.7 16.9M37.1 18.0L41.2 19.8M36.2 19.7L38.8 21.4M35.1 21.1L38.2 24.2M33.7 22.2L35.4 24.8M32.0 23.1L33.8 27.2M30.3 23.6L30.9 26.7M28.5 23.8L28.5 28.2M26.7 23.6L26.1 26.7M25.0 23.1L23.2 27.2M23.3 22.2L21.6 24.8M21.9 21.1L18.8 24.2M20.8 19.7L18.2 21.4M19.9 18.0L15.8 19.8M19.4 16.3L16.3 16.9M19.2 14.5L14.8 14.5M19.4 12.7L16.3 12.1M19.9 11.0L15.8 9.2M20.8 9.3L18.2 7.6M21.9 7.9L18.8 4.8M23.3 6.8L21.6 4.2M25.0 5.9L23.2 1.8M26.7 5.4L26.1 2.3M28.5 5.2L28.5 0.8M30.3 5.4L30.9 2.3M32.0 5.9L33.8 1.8M33.7 6.8L35.4 4.2M35.1 7.9L38.2 4.8M36.2 9.3L38.8 7.6M37.1 11.0L41.2 9.2M37.6 12.7L40.7 12.1" stroke="#ffd040" stroke-width=".7" opacity=".45"/>
 <circle cx="28.5" cy="14.5" r="11.5" fill="#ffdf50" opacity=".35"/>
 <circle cx="28.5" cy="14.5" r="10.3" fill="url(#sun)" stroke="#e3900a" stroke-width="1.03"/>
 <g filter="url(#cb)" fill="#fbfdfd">
  <ellipse cx="25.9" cy="18.0" rx="11.2" ry="1.2" opacity="0.60"/>
  <ellipse cx="26.7" cy="20.2" rx="16.2" ry="1.2" opacity="0.74"/>
  <ellipse cx="23.8" cy="22.4" rx="18.7" ry="1.2" opacity="0.88"/>
  <ellipse cx="25.0" cy="24.6" rx="16.8" ry="1.2" opacity="0.88"/>
  <ellipse cx="24.7" cy="26.8" rx="14.9" ry="1.2" opacity="0.74"/>
  <ellipse cx="24.3" cy="29.0" rx="13.0" ry="1.2" opacity="0.60"/>
  <ellipse cx="28.5" cy="23.0" rx="8.2" ry="4.6" opacity=".55"/>
 </g>
</svg>
<svg style="left:766px;top:290px" width="50" height="36" viewBox="0 0 50 36">
 <path d="M37.8 14.5L42.2 14.5M37.6 16.3L40.7 16.9M37.1 18.0L41.2 19.8M36.2 19.7L38.8 21.4M35.1 21.1L38.2 24.2M33.7 22.2L35.4 24.8M32.0 23.1L33.8 27.2M30.3 23.6L30.9 26.7M28.5 23.8L28.5 28.2M26.7 23.6L26.1 26.7M25.0 23.1L23.2 27.2M23.3 22.2L21.6 24.8M21.9 21.1L18.8 24.2M20.8 19.7L18.2 21.4M19.9 18.0L15.8 19.8M19.4 16.3L16.3 16.9M19.2 14.5L14.8 14.5M19.4 12.7L16.3 12.1M19.9 11.0L15.8 9.2M20.8 9.3L18.2 7.6M21.9 7.9L18.8 4.8M23.3 6.8L21.6 4.2M25.0 5.9L23.2 1.8M26.7 5.4L26.1 2.3M28.5 5.2L28.5 0.8M30.3 5.4L30.9 2.3M32.0 5.9L33.8 1.8M33.7 6.8L35.4 4.2M35.1 7.9L38.2 4.8M36.2 9.3L38.8 7.6M37.1 11.0L41.2 9.2M37.6 12.7L40.7 12.1" stroke="#ffd040" stroke-width=".7" opacity=".45"/>
 <circle cx="28.5" cy="14.5" r="11.5" fill="#ffdf50" opacity=".35"/>
 <circle cx="28.5" cy="14.5" r="10.3" fill="url(#sun)" stroke="#e3900a" stroke-width="1.03"/>
 <g filter="url(#cb)" fill="#fbfdfd">
  <ellipse cx="26.6" cy="18.0" rx="14.9" ry="1.2" opacity="0.60"/>
  <ellipse cx="27.9" cy="20.2" rx="16.3" ry="1.2" opacity="0.74"/>
  <ellipse cx="26.6" cy="22.4" rx="17.9" ry="1.2" opacity="0.88"/>
  <ellipse cx="24.5" cy="24.6" rx="19.0" ry="1.2" opacity="0.88"/>
  <ellipse cx="24.7" cy="26.8" rx="17.1" ry="1.2" opacity="0.74"/>
  <ellipse cx="25.9" cy="29.0" rx="16.0" ry="1.2" opacity="0.60"/>
  <ellipse cx="28.5" cy="23.0" rx="8.2" ry="4.6" opacity=".55"/>
 </g>
</svg>

<!-- wallpaper decorations -->
<svg style="left:0;top:0" width="1024" height="768" viewBox="0 0 1024 768">
 <g fill="none" stroke="#fff" stroke-width="1">
  <ellipse cx="512" cy="287" rx="89" ry="69" opacity=".25"/>
  <ellipse cx="533" cy="359" rx="95" ry="152" transform="rotate(10 533 359)" opacity=".25"/>
  <circle cx="622" cy="307" r="99" opacity=".25"/>
  <path d="M422 303.5H560" opacity=".12"/>
  <path d="M512.5 205V520" opacity=".14"/>
 </g>
 <g fill="none" stroke="#f4f8f8" stroke-linecap="round">
  <path d="M545 248C570 250 588 268 586 295C585 318 577 328 565 331" stroke-width="5" opacity=".33"/>
  <path d="M521 275C513 300 514 330 530 352C540 366 552 372 562 373" stroke-width="4" opacity=".3"/>
  <path d="M567 282C555 279 544 290 544 305C544 321 553 329 562 328C569 327 574 322 577 318" stroke-width="3.6" opacity=".7"/>
 </g>
</svg>
<!-- busy spinner -->
<svg style="left:640px;top:290px" width="50" height="50" viewBox="0 0 50 50">
 <g fill="none" stroke-linecap="butt">
 <path d="M20 6A19 19 0 0 0 6 28" stroke="#7d9595" stroke-width="5"/>
 <path d="M20 6A19 19 0 0 0 6 28" stroke="#f6f8f8" stroke-width="3.2"/>
 <path d="M42 19A19 19 0 0 1 29 41" stroke="#7d9595" stroke-width="5"/>
 <path d="M42 19A19 19 0 0 1 29 41" stroke="#f6f8f8" stroke-width="3.2"/>
 </g>
</svg>

<!-- TASKBAR -->
<div class="a" style="left:0;top:741px;width:1024px;height:27px;background:linear-gradient(#ccd9db,#c6d4d6);border-top:1px solid #f5f9f9;box-shadow:0 -2px 10px 2px rgba(0,25,35,.45)"></div>
<!-- kde launcher -->
<svg style="left:3px;top:746px" width="20" height="20" viewBox="0 0 20 20">
 <defs><radialGradient id="kdg" cx=".5" cy=".45" r=".6"><stop offset="0" stop-color="#5a9af0"/><stop offset=".7" stop-color="#2f6ad0"/><stop offset="1" stop-color="#1a44a8"/></radialGradient></defs>
 <rect x=".5" y=".5" width="19" height="19" rx="3" fill="url(#kdg)" stroke="#163a90" stroke-width=".8"/>
 <path d="M7.20 5.45A5.6 5.6 0 1 0 14.29 13.90" stroke="#fff" stroke-width="1.6" fill="none"/>
 <path d="M6.40 6.01L4.99 4.32M4.40 10.30L2.20 10.30M6.04 14.26L4.48 15.82M10.00 15.90L10.00 18.10M13.96 14.26L15.52 15.82" stroke="#fff" stroke-width="2" fill="none"/>
 <path d="M12 3v10.2" stroke="#fff" stroke-width="2.4"/>
 <path d="M12.6 8.6L17.2 3.2M13 8l4.4 5.2" stroke="#fff" stroke-width="2.2" fill="none"/>
</svg>
<!-- dots -->
<svg style="left:31px;top:753px" width="22" height="8" viewBox="0 0 22 8">
 <circle cx="4" cy="4" r="3.1" fill="#d0303a"/><circle cx="11" cy="4" r="3.1" fill="#3f95d8"/><circle cx="18" cy="4" r="3.1" fill="#76c040"/>
 <circle cx="3.4" cy="3" r="1.2" fill="#fff" opacity=".4"/><circle cx="10.4" cy="3" r="1.2" fill="#fff" opacity=".4"/><circle cx="17.4" cy="3" r="1.2" fill="#fff" opacity=".4"/>
</svg>
<!-- file mgr -->
<svg style="left:69px;top:747px" width="16" height="17" viewBox="0 0 32 34">
 <path d="M3.5 4.5Q3.5 1 7 1h18q3.5 0 3.5 3.5V32.5h-25z" fill="url(#lid)" stroke="#7a7a7a" stroke-width="1.6"/>
 <rect x="5.5" y="6.5" width="21" height="11" fill="url(#drw)" stroke="#4a6a8a" stroke-width="1"/>
 <rect x="5.5" y="19" width="21" height="11.5" fill="url(#drw)" stroke="#4a6a8a" stroke-width="1"/>
 <rect x="12" y="6.5" width="8" height="3" rx="1" fill="#fafafa" stroke="#888" stroke-width=".8"/>
 <rect x="12" y="19" width="8" height="3" rx="1" fill="#fafafa" stroke="#888" stroke-width=".8"/>
</svg>
<!-- globe -->
<svg style="left:99px;top:747px" width="17" height="17" viewBox="0 0 17 17">
 <g transform="translate(8 10.2) scale(1 .7)"><path d="M6.16 -0.73 6.20 -0.17 8.00 -0.01 7.73 2.06 5.95 1.76 5.70 2.44 5.45 2.95 6.93 3.99 5.66 5.65 4.27 4.49 3.71 4.96 3.24 5.28 4.01 6.92 2.08 7.73 1.45 6.03 0.73 6.16 0.17 6.20 0.01 8.00 -2.06 7.73 -1.76 5.95 -2.44 5.70 -2.95 5.45 -3.99 6.93 -5.65 5.66 -4.49 4.27 -4.96 3.71 -5.28 3.24 -6.92 4.01 -7.73 2.08 -6.03 1.45 -6.16 0.73 -6.20 0.17 -8.00 0.01 -7.73 -2.06 -5.95 -1.76 -5.70 -2.44 -5.45 -2.95 -6.93 -3.99 -5.66 -5.65 -4.27 -4.49 -3.71 -4.96 -3.24 -5.28 -4.01 -6.92 -2.08 -7.73 -1.45 -6.03 -0.73 -6.16 -0.17 -6.20 -0.01 -8.00 2.06 -7.73 1.76 -5.95 2.44 -5.70 2.95 -5.45 3.99 -6.93 5.65 -5.66 4.49 -4.27 4.96 -3.71 5.28 -3.24 6.92 -4.01 7.73 -2.08 6.03 -1.45z" fill="url(#gg)" stroke="#7a7a7a" stroke-width=".8"/></g>
 <circle cx="9" cy="7.2" r="6.4" fill="url(#glb)" stroke="#2a7fd0" stroke-width=".4"/>
</svg>

<!-- scissors -->
<svg style="left:731px;top:747px" width="17" height="19" viewBox="0 0 17 19">
 <g stroke-linecap="round">
 <path d="M3.3 1.6L9.8 11.2M13.1 1.6L6.6 11.2" stroke="#8e9696" stroke-width="4.4"/>
 <circle cx="4.3" cy="14.6" r="3.1" fill="none" stroke="#8e9696" stroke-width="3.6"/>
 <circle cx="12.5" cy="14.6" r="3.1" fill="none" stroke="#8e9696" stroke-width="3.6"/>
 <path d="M3.3 1.6L9.8 11.2M13.1 1.6L6.6 11.2" stroke="#fdfdfd" stroke-width="2.8"/>
 <circle cx="4.3" cy="14.6" r="3.1" fill="none" stroke="#fdfdfd" stroke-width="2.1"/>
 <circle cx="12.5" cy="14.6" r="3.1" fill="none" stroke="#fdfdfd" stroke-width="2.1"/>
 <circle cx="4.3" cy="14.6" r="1.2" fill="#a8b0b0"/><circle cx="12.5" cy="14.6" r="1.2" fill="#a8b0b0"/>
 </g>
</svg>
<!-- it -->
<!-- speaker -->
<svg style="left:783px;top:744px" width="25" height="24" viewBox="0 0 25 24">
 <path d="M1.2 12.5Q1 11.2 2.2 10.4L8.2 6.2Q9.6 12 8.2 17.8L2.2 13.8Q1.2 13.4 1.2 12.5z" fill="#f4f6f6" stroke="#8e9696" stroke-width=".9" stroke-linejoin="round"/>
 <path d="M10.6 6.8Q12.8 12 10.6 17.6" stroke="#8e9696" stroke-width="3.4" fill="none" stroke-linecap="round"/>
 <path d="M10.6 6.8Q12.8 12 10.6 17.6" stroke="#fafbfb" stroke-width="1.9" fill="none" stroke-linecap="round"/>
 <path d="M14.6 4.2Q18.4 12 14.6 20.8" stroke="#9aa2a2" stroke-width="2.2" fill="none"/>
 <path d="M14.6 4.2Q18.4 12 14.6 20.8" stroke="#e8ecec" stroke-width=".9" fill="none"/>
 <path d="M18.3 1.2Q24.2 12 18.3 23.6" stroke="#a2aaaa" stroke-width="1" fill="none"/>
 <path d="M19.8 1.2Q25.6 12 19.8 23.6" stroke="#b0b8b8" stroke-width=".8" fill="none"/>
</svg>
<!-- network -->
<svg style="left:812px;top:745px" width="23" height="22" viewBox="0 0 23 22">
 <rect x="5.7" y="2.4" width="11.3" height="10.4" rx="1.8" fill="none" stroke="#8e9696" stroke-width="3.4"/>
 <rect x="5.7" y="2.4" width="11.3" height="10.4" rx="1.8" fill="none" stroke="#fafbfb" stroke-width="1.9"/>
 <path d="M11.4 12.8v4.5M1.8 17.8h19.6" stroke="#8e9696" stroke-width="3.6" stroke-linecap="round"/>
 <path d="M11.4 12.8v4.5M1.8 17.8h19.6" stroke="#fafbfb" stroke-width="2" stroke-linecap="round"/>
 <circle cx="11.5" cy="18.3" r="2.8" fill="#e4e8e8" stroke="#8e9696" stroke-width=".8"/>
</svg>
<!-- arrow -->
<svg style="left:843px;top:752px" width="10" height="7" viewBox="0 0 10 7"><path d="M.8 6.2L5 1l4.2 5.2z" fill="#f6f8f8" stroke="#9aa0a0" stroke-width=".8"/></svg>
<!-- clock -->
<!-- terminal -->
<svg style="left:920px;top:746px" width="20" height="19" viewBox="0 0 20 19">
 <rect x=".5" y=".5" width="19" height="18" rx="1.5" fill="#b8bcbd" stroke="#6a6d6e"/>
 <rect x="2" y="2" width="16" height="12.5" fill="#1e1f20"/>
 <path d="M3.5 4l2.5 1.6-2.5 1.6M6.5 8h2.5" stroke="#fff" stroke-width=".9" fill="none"/>
 <path d="M2.5 16.2h15" stroke="#7a7d7e" stroke-width="1" stroke-dasharray="1 .5"/>
</svg>
<!-- °C -->
<div class="a" style="left:951px;top:746px;width:14px;height:10px;background:linear-gradient(#f0f0f0,#d8d8d8);border-radius:2px"></div>
<svg style="left:953px;top:746px" width="10" height="10" viewBox="0 0 10 10"><circle cx="5" cy="5" r="3.4" fill="none" stroke="#777" stroke-width="1.2"/><path d="M3 7l4-4" stroke="#777" stroke-width="1.2"/></svg>
<!-- pager -->
<div class="a" style="left:979px;top:743px;width:17px;height:25px;background:#b9c4be"></div>
<div class="a" style="left:983px;top:746px;width:9px;height:1px;background:#9aa69f"></div><div class="a" style="left:987px;top:761px;width:1px;height:3px;background:#8e9a94"></div>
<!-- cashew -->
<svg style="left:1003px;top:742px" width="21" height="26" viewBox="0 0 21 26">
 <path d="M12.7 4.5A12 12 0 0 0 5 26" stroke="#eef3f3" stroke-width="1" fill="none" opacity=".9"/>
 <defs><linearGradient id="csh2" x1="0" y1="0" x2="1" y2="1"><stop offset="0" stop-color="#e8eaea"/><stop offset=".6" stop-color="#d0d4d4"/><stop offset="1" stop-color="#b4baba"/></linearGradient></defs>
 <path d="M13 6A7.5 7.5 0 1 0 20.5 14.5C19 15.5 16.5 15.2 15 13.8 13 12 12.5 9 13 6z" fill="url(#csh2)" stroke="#b4bcbc" stroke-width=".6"/>
 <circle cx="15.5" cy="6" r=".8" fill="#b9c0c2"/><circle cx="18" cy="6.8" r=".8" fill="#b9c0c2"/><circle cx="20" cy="8.4" r=".8" fill="#b9c0c2"/>
</svg>

<!-- MENU PANEL -->
<div class="a" style="left:0;top:233px;width:394px;height:508px;box-shadow:2px -2px 9px 2px rgba(0,25,35,.6);border-top-right-radius:3px;clip-path:inset(-30px -30px 0 -30px)"></div>
<div class="a" style="left:0;top:233px;width:392px;height:507px;background:linear-gradient(#cad9db,#c4d2d4 60px,#c9d4d6);border-top:1px solid #fff;border-right:2px solid #f4f8f8;border-top-right-radius:3px"></div>
<!-- content white -->
<div class="a" style="left:0;top:296px;width:390px;height:372px;background:#fff;border-radius:2px 3px 0 0"></div>
<!-- tab bar -->
<div class="a" style="left:0;top:667px;width:390px;height:74px;background:linear-gradient(#ced3d4,#cbd2d3 40px,#c8d0d2)"></div>
<svg style="left:0;top:667px" width="390" height="74" viewBox="0 0 390 74"><defs><linearGradient id="tbg" x1="0" y1="0" x2="0" y2="1"><stop offset="0" stop-color="#c4c5c5"/><stop offset="1" stop-color="#c9cacb"/></linearGradient></defs><path d="M0 0H390V1.5Q180 8 0 33z" fill="url(#tbg)"/></svg>
<!-- active tab -->
<div class="a" style="left:6px;top:667px;width:60px;height:71px;background:#fff;border-radius:0 0 6px 6px"></div>
<div class="a" style="left:0;top:667px;width:6px;height:10px;background:#fff"></div>
<div class="a" style="left:0;top:667px;width:6px;height:10px;background:#c4c5c5;border-top-right-radius:6px"></div>
<div class="a" style="left:66px;top:667px;width:6px;height:10px;background:#fff"></div>
<div class="a" style="left:66px;top:667px;width:6px;height:10px;background:#c4c5c5;border-top-left-radius:6px"></div>

<!-- header text -->
<!-- KDE badge -->
<div class="a" style="left:290px;top:240px;width:78px;height:13px;border:1px solid #5d5d5d;background:#fff"></div>
<div class="a" style="left:292px;top:242px;width:10px;height:11px;background:linear-gradient(135deg,#8ab4ec,#4f86d4)"></div>
<div class="a" style="left:303px;top:242px;width:20px;height:11px;background:#3f86de"></div>
<div class="a" style="left:324px;top:242px;width:44px;height:11px;background:#878a76"></div>
<svg style="left:292px;top:242px" width="10" height="11"><path d="M4 2v7M4 5.5l3.5-3.5M4.5 5l3 4" stroke="#e8f0fa" stroke-width="1.3" fill="none"/><path d="M2.5 3a4 4 0 0 0 0 6" stroke="#dfe9f7" stroke-width=".8" fill="none" stroke-dasharray="1 .6"/></svg>
<!-- search -->
<div class="a" style="left:89px;top:268px;width:275px;height:14px;background:#fff;border:2px solid #62b3e6;border-radius:3px;box-shadow:inset 0 1px 2px rgba(90,170,220,.35)"></div>
<!-- binoculars icon -->
<svg style="left:5px;top:261px" width="32" height="32" viewBox="0 0 32 32">
 <defs><linearGradient id="bng" x1="0" y1="0" x2="1" y2="1"><stop offset="0" stop-color="#6a6a6a"/><stop offset=".5" stop-color="#1a1a1a"/><stop offset="1" stop-color="#000"/></linearGradient></defs>
 <path d="M24.57 8.65 25.02 10.19 27.64 10.06 27.64 13.94 25.02 13.81 24.43 15.69 23.66 17.10 25.60 18.86 22.86 21.60 21.10 19.66 19.35 20.57 17.81 21.02 17.94 23.64 14.06 23.64 14.19 21.02 12.31 20.43 10.90 19.66 9.14 21.60 6.40 18.86 8.34 17.10 7.43 15.35 6.98 13.81 4.36 13.94 4.36 10.06 6.98 10.19 7.57 8.31 8.34 6.90 6.40 5.14 9.14 2.40 10.90 4.34 12.65 3.43 14.19 2.98 14.06 0.36 17.94 0.36 17.81 2.98 19.69 3.57 21.10 4.34 22.86 2.40 25.60 5.14 23.66 6.90z" fill="#e9e9e9" stroke="#9a9a9a" stroke-width=".7"/>
 <circle cx="16" cy="11.5" r="3" fill="#c9d5d7"/>
 <path d="M1.5 25L7 15.5 11 13.5 14.2 15 14.5 22 12 30z" fill="url(#bng)" stroke="#111" stroke-width=".6"/>
 <path d="M30 25L24.5 15.5 20.5 13.5 17.3 15 17 22 19.5 30z" fill="url(#bng)" stroke="#111" stroke-width=".6"/>
 <path d="M13 16h5.5v5h-5.5z" fill="#111"/>
 <circle cx="6.4" cy="26.2" r="6.2" fill="#1b1b1b" stroke="#555" stroke-width=".6"/>
 <circle cx="25.2" cy="26.2" r="6.2" fill="#1b1b1b" stroke="#555" stroke-width=".6"/>
 <circle cx="6.4" cy="26.4" r="3.9" fill="#9a4e0c"/><circle cx="25.2" cy="26.4" r="3.9" fill="#9a4e0c"/>
 <circle cx="6.8" cy="25.8" r="2.4" fill="#c8681a"/><circle cx="25.6" cy="25.8" r="2.4" fill="#c8681a"/>
 <circle cx="5" cy="27.5" r=".8" fill="#f0d0b0" opacity=".7"/><circle cx="27" cy="27.5" r=".8" fill="#f0d0b0" opacity=".7"/>
</svg>

<!-- favourites label -->

<!-- list items -->

<!-- globe icon -->
<svg style="left:17px;top:331px" width="32" height="32" viewBox="0 0 32 32">
 <defs><radialGradient id="glb" cx=".45" cy=".3" r=".75"><stop offset="0" stop-color="#8fd4ff"/><stop offset=".55" stop-color="#2c95e4"/><stop offset="1" stop-color="#0d5fb5"/></radialGradient>
 <linearGradient id="gg" x1="0" y1="0" x2="0" y2="1"><stop offset="0" stop-color="#f4f4f4"/><stop offset="1" stop-color="#a8a8a8"/></linearGradient></defs>
 <g transform="translate(16.2 18.5) scale(1 .68)"><path d="M12.41 -1.48 12.50 -0.34 16.00 -0.01 15.46 4.13 11.99 3.54 11.49 4.92 10.99 5.95 13.86 7.99 11.32 11.30 8.61 9.06 7.49 10.01 6.54 10.65 8.01 13.85 4.16 15.45 2.93 12.15 1.48 12.41 0.34 12.50 0.01 16.00 -4.13 15.46 -3.54 11.99 -4.92 11.49 -5.95 10.99 -7.99 13.86 -11.30 11.32 -9.06 8.61 -10.01 7.49 -10.65 6.54 -13.85 8.01 -15.45 4.16 -12.15 2.93 -12.41 1.48 -12.50 0.34 -16.00 0.01 -15.46 -4.13 -11.99 -3.54 -11.49 -4.92 -10.99 -5.95 -13.86 -7.99 -11.32 -11.30 -8.61 -9.06 -7.49 -10.01 -6.54 -10.65 -8.01 -13.85 -4.16 -15.45 -2.93 -12.15 -1.48 -12.41 -0.34 -12.50 -0.01 -16.00 4.13 -15.46 3.54 -11.99 4.92 -11.49 5.95 -10.99 7.99 -13.86 11.30 -11.32 9.06 -8.61 10.01 -7.49 10.65 -6.54 13.85 -8.01 15.45 -4.16 12.15 -2.93z" fill="url(#gg)" stroke="#777" stroke-width="1"/></g>
 <circle cx="17.4" cy="12.5" r="12" fill="url(#glb)" stroke="#2a7fd0" stroke-width=".5"/>
 <path d="M8 10c5-2 12-2 18 1M7 16c6 1 13 1 20-2" stroke="#bfe6ff" stroke-width=".5" fill="none" opacity=".6"/>
 <circle cx="14" cy="7" r=".7" fill="#fff" opacity=".8"/><circle cx="20" cy="9" r=".6" fill="#fff" opacity=".8"/><circle cx="12" cy="12" r=".6" fill="#fff" opacity=".7"/>
</svg>
<!-- mail icon -->
<svg style="left:17px;top:371px" width="32" height="32" viewBox="0 0 32 32">
 <rect x=".5" y="4.5" width="31" height="22" fill="#f1f3f6" stroke="#c9cdd3" stroke-width=".8"/>
 <rect x="1.3" y="5.3" width="29.4" height="20.4" fill="none" stroke="#e0505a" stroke-width="1" stroke-dasharray="1.6 2.4" opacity=".8"/>
 <rect x="1.3" y="5.3" width="29.4" height="20.4" fill="none" stroke="#5080d8" stroke-width="1" stroke-dasharray="1.6 2.4" stroke-dashoffset="2" opacity=".8"/>
 <path d="M3 20h14" stroke="#d0d4da" stroke-width="1"/>
 <rect x="23" y="8" width="6" height="7" fill="#4d8ee8"/><path d="M25 13l2-3" stroke="#fff" stroke-width=".7"/>
 <path d="M3.5 1l24 28" stroke="#555" stroke-width="3.4" stroke-linecap="round"/>
 <path d="M3.5 1l24 28" stroke="#d8d8d8" stroke-width="1.6" stroke-linecap="round"/>
 <path d="M26 27.5l2 2.5" stroke="#333" stroke-width="1"/>
</svg>
<!-- tools icon -->
<svg style="left:17px;top:411px" width="32" height="32" viewBox="0 0 32 32">
 <defs><linearGradient id="ydr" x1="0" y1="0" x2="1" y2="1"><stop offset="0" stop-color="#ffd84a"/><stop offset="1" stop-color="#d89a00"/></linearGradient></defs>
 <path d="M2.5 2.5L16 16" stroke="#5a5a5a" stroke-width="2.6" stroke-linecap="round"/>
 <path d="M2.5 2.5L16 16" stroke="#f0f0f0" stroke-width="1.1" stroke-linecap="round"/>
 <path d="M5 27.5L23 9.5" stroke="#777" stroke-width="4.6" stroke-linecap="round"/>
 <path d="M5 27.5L23 9.5" stroke="#1e1e1e" stroke-width="2.4" stroke-linecap="round"/>
 <path d="M21.5 9a5.3 5.3 0 0 0 8.5 -6l-2.6 2.4-2.2-.4-.3-2.2L27.3.5A5.3 5.3 0 0 0 21.5 9z" fill="#c8c8c8" stroke="#6a6a6a" stroke-width=".9"/>
 <circle cx="4.5" cy="28" r="2.6" fill="#d8d8d8" stroke="#666" stroke-width=".9"/>
 <path d="M18 17.5L29.5 28.5" stroke="#a87400" stroke-width="5.6" stroke-linecap="round"/>
 <path d="M18 17.5L29.5 28.5" stroke="url(#ydr)" stroke-width="4.2" stroke-linecap="round"/>
</svg>
<!-- file manager icon -->
<svg style="left:17px;top:451px" width="32" height="32" viewBox="0 0 32 32">
 <defs><linearGradient id="drw" x1="0" y1="0" x2="1" y2="1"><stop offset="0" stop-color="#3c8ff0"/><stop offset=".6" stop-color="#78bdf8"/><stop offset="1" stop-color="#c4e6ff"/></linearGradient>
 <linearGradient id="lid" x1="0" y1="0" x2="0" y2="1"><stop offset="0" stop-color="#d8d8d8"/><stop offset="1" stop-color="#f4f4f4"/></linearGradient></defs>
 <path d="M3.5 4.5Q3.5 1 7 1h18q3.5 0 3.5 3.5V30.5h-25z" fill="url(#lid)" stroke="#8a8a8a" stroke-width=".9"/>
 <rect x="5" y="6" width="22" height="10" fill="url(#drw)" stroke="#5a6a7a" stroke-width=".5"/>
 <rect x="5" y="17.5" width="22" height="11.5" fill="url(#drw)" stroke="#5a6a7a" stroke-width=".5"/>
 <rect x="12" y="6" width="8" height="2.2" rx=".8" fill="#fafafa" stroke="#888" stroke-width=".5"/>
 <rect x="12" y="17.5" width="8" height="2.2" rx=".8" fill="#fafafa" stroke="#888" stroke-width=".5"/>
</svg>

<!-- tab icons -->
<svg style="left:14px;top:679px" width="44" height="43" viewBox="0 0 44 43">
 <defs><linearGradient id="stg" x1="0" y1="0" x2="0" y2="1"><stop offset="0" stop-color="#fffaf0"/><stop offset=".5" stop-color="#f2d9a4"/><stop offset=".56" stop-color="#eec226"/><stop offset=".8" stop-color="#fbe600"/><stop offset="1" stop-color="#e2a800"/></linearGradient></defs>
 <path d="M22.00 3.70 28.82 13.82 40.55 17.17 33.03 26.78 33.46 38.98 22.00 34.80 10.54 38.98 10.97 26.78 3.45 17.17 15.18 13.82z" fill="url(#stg)" stroke="#d89a1e" stroke-width="3" stroke-linejoin="round"/>
 <path d="M22.00 3.70 28.82 13.82 40.55 17.17 33.03 26.78 33.46 38.98 22.00 34.80 10.54 38.98 10.97 26.78 3.45 17.17 15.18 13.82z" fill="none" stroke="#f6e6b0" stroke-width=".8" stroke-linejoin="round" opacity=".5"/>
</svg>
<svg style="left:97px;top:681px" width="38" height="38" viewBox="0 0 38 38">
 <defs><linearGradient id="dmg" x1="0" y1="0" x2=".3" y2="1"><stop offset="0" stop-color="#c6c0e4"/><stop offset=".5" stop-color="#a49cc8"/><stop offset="1" stop-color="#8a82b0"/></linearGradient>
 <clipPath id="dmc"><path d="M19 1.5L36.5 19 19 36.5 1.5 19z"/></clipPath></defs>
 <path d="M19 1L37 19 19 37 1 19z" fill="url(#dmg)"/>
 <g clip-path="url(#dmc)"><path d="M15.42 17.59 15.49 18.57 18.00 18.82 17.66 22.16 15.16 21.91 14.80 23.12 14.44 24.03 16.59 25.34 14.84 28.21 12.69 26.89 11.85 27.83 11.13 28.50 12.49 30.61 9.67 32.43 8.31 30.32 7.14 30.79 6.20 31.08 6.52 33.58 3.18 34.00 2.87 31.50 1.61 31.42 0.64 31.28 -0.16 33.66 -3.34 32.59 -2.54 30.21 -3.64 29.59 -4.45 29.04 -6.21 30.84 -8.61 28.49 -6.85 26.69 -7.58 25.66 -8.07 24.81 -10.43 25.67 -11.58 22.52 -9.21 21.66 -9.42 20.41 -9.49 19.43 -12.00 19.18 -11.66 15.84 -9.16 16.09 -8.80 14.88 -8.44 13.97 -10.59 12.66 -8.84 9.79 -6.69 11.11 -5.85 10.17 -5.13 9.50 -6.49 7.39 -3.67 5.57 -2.31 7.68 -1.14 7.21 -0.20 6.92 -0.52 4.42 2.82 4.00 3.13 6.50 4.39 6.58 5.36 6.72 6.16 4.34 9.34 5.41 8.54 7.79 9.64 8.41 10.45 8.96 12.21 7.16 14.61 9.51 12.85 11.31 13.58 12.34 14.07 13.19 16.43 12.33 17.58 15.48 15.21 16.34z" fill="#8a82b4" opacity=".7"/><circle cx="29" cy="19" r="8" fill="#c4bee0" opacity=".45"/></g>
 <path d="M19 1L37 19 19 37 1 19z" fill="none" stroke="#3a3844" stroke-width="1.6" stroke-linejoin="round"/>
 <path d="M3.5 19L19 3.5" stroke="#fff" stroke-width=".8" opacity=".5"/>
</svg>
<svg style="left:177px;top:680px" width="48" height="40" viewBox="0 0 48 40">
 <defs><linearGradient id="scr" x1="0" y1="0" x2="1" y2="1"><stop offset="0" stop-color="#b4e2ff"/><stop offset=".5" stop-color="#6cc0f8"/><stop offset=".52" stop-color="#55aef2"/><stop offset="1" stop-color="#2f84e0"/></linearGradient>
 <linearGradient id="twr" x1="0" y1="0" x2="1" y2="0"><stop offset="0" stop-color="#bdbdbd"/><stop offset=".4" stop-color="#f6f6f6"/><stop offset="1" stop-color="#d0d0d0"/></linearGradient></defs>
 <rect x="2" y="5.3" width="9.5" height="29" rx="1" fill="url(#twr)" stroke="#a8a8a8" stroke-width=".7"/>
 <rect x="9.6" y="11" width="1.4" height="2.2" fill="#5ec8d8"/><rect x="9.6" y="28" width="1.4" height="2.4" fill="#e06050"/>
 <ellipse cx="7" cy="35" rx="4" ry="1.4" fill="#222"/>
 <rect x="12" y="0.9" width="34.2" height="26" rx="1.2" fill="#2e2e2e"/>
 <rect x="14.5" y="3.5" width="29" height="21" fill="url(#scr)"/>
 <path d="M26 26.8h6l.8 4.2h-7.6z" fill="#dadada" stroke="#b8b8b8" stroke-width=".5"/>
 <ellipse cx="29" cy="34" rx="10.6" ry="3.1" fill="#ececec" stroke="#c4c4c4" stroke-width=".7"/>
</svg>
<svg style="left:260px;top:677px" width="42" height="44" viewBox="0 0 42 44">
 <defs><linearGradient id="pg" x1="0" y1="0" x2="1" y2="1"><stop offset="0" stop-color="#fafafa"/><stop offset="1" stop-color="#e6e6e6"/></linearGradient></defs>
 <path d="M1 2h30v28l-9.5 12.5H1z" fill="url(#pg)" stroke="#c4c4c4" stroke-width=".8"/>
 <path d="M21.5 42.5Q23 33 31 30Q26 35 21.5 42.5z" fill="#d8d8d8" stroke="#b0b0b0" stroke-width=".6"/>
 <circle cx="29" cy="10.5" r="10.3" fill="#0f5aa8"/>
 <circle cx="29" cy="10.5" r="8.9" fill="#3d8ad0"/>
 <circle cx="29" cy="10.5" r="7.3" fill="#f4f7fa"/>
 <path d="M28.6 4.5v6.5h5" stroke="#111" stroke-width="1.4" fill="none"/>
</svg>
<svg style="left:330px;top:679px" width="41" height="41" viewBox="0 0 41 41">
 <defs><linearGradient id="pwg" x1="0" y1="0" x2="0" y2="1"><stop offset="0" stop-color="#e08a8a"/><stop offset=".48" stop-color="#c45050"/><stop offset=".5" stop-color="#b81c10"/><stop offset="1" stop-color="#c82a10"/></linearGradient>
 <radialGradient id="pwr" cx=".5" cy=".62" r=".45"><stop offset="0" stop-color="#ff6a10" stop-opacity=".9"/><stop offset="1" stop-color="#ff6a10" stop-opacity="0"/></radialGradient></defs>
 <rect x=".8" y=".8" width="39.4" height="39.4" rx="3" fill="url(#pwg)" stroke="#a81810" stroke-width="1.2"/>
 <rect x=".8" y=".8" width="39.4" height="39.4" rx="3" fill="url(#pwr)"/>
 <path d="M12.82 11.36A11.8 11.8 0 1 0 27.98 11.36" stroke="#ececec" stroke-width="5.6" fill="none" stroke-linecap="round"/>
 <path d="M20.4 9.8v12.2" stroke="#e8e8e8" stroke-width="5.2" stroke-linecap="round"/>
</svg>
<!-- tab labels -->

<!-- TEXTS -->
<div class="tx" style="left:11.58px;top:239.60px;font-size:13px;font-weight:normal;color:#111;transform:scaleX(1.123);"><b>Marco De Luca (marco)</b> su <b>debian</b></div>
<div class="tx" style="left:43.00px;top:270.84px;font-size:12px;font-weight:normal;color:#1a1a1a;transform:scaleX(1.103);">Cerca:</div>
<div class="tx" style="left:321.07px;top:311.99px;font-size:11px;font-weight:normal;color:#8c8288;transform:scaleX(1.225);">Preferiti</div>
<div class="tx" style="left:58.69px;top:333.54px;font-size:12px;font-weight:normal;color:#1a1a1a;transform:scaleX(1.107);">Browser Web</div>
<div class="tx" style="left:58.61px;top:373.54px;font-size:12px;font-weight:normal;color:#1a1a1a;transform:scaleX(1.189);">Programma di posta elettronica</div>
<div class="tx" style="left:58.64px;top:413.64px;font-size:12px;font-weight:normal;color:#1a1a1a;transform:scaleX(1.158);">Impostazioni di sistema</div>
<div class="tx" style="left:58.90px;top:453.24px;font-size:12px;font-weight:normal;color:#1a1a1a;transform:scaleX(1.171);">Gestore dei file</div>
<div class="tx" style="left:12.07px;top:721.89px;font-size:11px;font-weight:normal;color:#1c1c2a;transform:scaleX(1.228);">Preferiti</div>
<div class="tx" style="left:84.40px;top:721.89px;font-size:11px;font-weight:normal;color:#111;transform:scaleX(1.098);text-shadow:0 0 2px rgba(255,255,255,.7);">Applicazioni</div>
<div class="tx" style="left:173.75px;top:721.89px;font-size:11px;font-weight:normal;color:#111;transform:scaleX(1.146);text-shadow:0 0 2px rgba(255,255,255,.7);">Computer</div>
<div class="tx" style="left:256.59px;top:721.89px;font-size:11px;font-weight:normal;color:#111;transform:scaleX(1.106);text-shadow:0 0 2px rgba(255,255,255,.7);">Recenti</div>
<div class="tx" style="left:337.45px;top:722.09px;font-size:11px;font-weight:normal;color:#111;transform:scaleX(1.153);text-shadow:0 0 2px rgba(255,255,255,.7);">Esci</div>
<div class="tx" style="left:556.83px;top:189.56px;font-size:16px;font-weight:bold;color:#000;transform:scaleX(1.168);">Lecce</div>
<div class="tx" style="left:722.27px;top:217.59px;font-size:11px;font-weight:normal;color:#111;transform:scaleX(1.133);">Max: 16°C Min: 10°C</div>
<div class="tx" style="left:499.70px;top:259.54px;font-size:12px;font-weight:bold;color:#000;transform:scaleX(1.162);">Giorno</div>
<div class="tx" style="left:591.17px;top:259.54px;font-size:12px;font-weight:bold;color:#000;transform:scaleX(1.334);">Notte</div>
<div class="tx" style="left:694.90px;top:259.54px;font-size:12px;font-weight:bold;color:#000;transform:scaleX(1.169);">29</div>
<div class="tx" style="left:784.70px;top:259.54px;font-size:12px;font-weight:bold;color:#000;transform:scaleX(1.185);">30</div>
<div class="tx" style="left:506.04px;top:353.84px;font-size:12px;font-weight:normal;color:#111;transform:scaleX(1.156);">16°C</div>
<div class="tx" style="left:596.35px;top:353.84px;font-size:12px;font-weight:normal;color:#111;transform:scaleX(1.150);">15°C</div>
<div class="tx" style="left:686.05px;top:353.84px;font-size:12px;font-weight:normal;color:#111;transform:scaleX(1.152);">16°C</div>
<div class="tx" style="left:776.36px;top:353.84px;font-size:12px;font-weight:normal;color:#111;transform:scaleX(1.140);">16°C</div>
<div class="tx" style="left:506.05px;top:400.44px;font-size:12px;font-weight:normal;color:#111;transform:scaleX(1.152);">10°C</div>
<div class="tx" style="left:596.30px;top:400.44px;font-size:12px;font-weight:normal;color:#111;transform:scaleX(1.198);">11°C</div>
<div class="tx" style="left:691.00px;top:400.44px;font-size:12px;font-weight:normal;color:#111;transform:scaleX(1.060);">9°C</div>
<div class="tx" style="left:781.25px;top:400.44px;font-size:12px;font-weight:normal;color:#111;transform:scaleX(1.038);">9°C</div>
<div class="tx" style="left:716.13px;top:430.49px;font-size:11px;font-weight:normal;color:#111;transform:scaleX(1.173);text-decoration:underline;">Powered by wetter.com</div>
<div class="tx" style="left:935.19px;top:5.90px;font-size:13px;font-weight:normal;color:#111;transform:scaleX(1.109);">Desktop</div>
<div class="tx" style="left:862.26px;top:747.46px;font-size:17.6px;font-weight:normal;color:#f6f8f8;transform:scaleX(1.244);font-family:'Liberation Serif',serif;text-shadow:.4px 0 0 #fff,0 0 1px #5a6668,0 0 1px #5a6668,0 1px 2px rgba(60,70,72,.6);">21:16</div>
<div class="tx" style="left:762.08px;top:748.55px;font-size:14px;font-weight:bold;color:#000;transform:scaleX(1.125);">it</div>
<div class="tx" style="left:951.39px;top:757.16px;font-size:9.5px;font-weight:normal;color:#000;transform:scaleX(1.211);">°C</div>
<div class="tx" style="left:304.90px;top:245.21px;font-size:6.6px;font-weight:bold;color:#fff;letter-spacing:0.55px">KDE</div>
<div class="tx" style="left:326.70px;top:245.21px;font-size:6.6px;font-weight:bold;color:#fff;letter-spacing:1.02px">DESKTOP</div>

</body></html>
